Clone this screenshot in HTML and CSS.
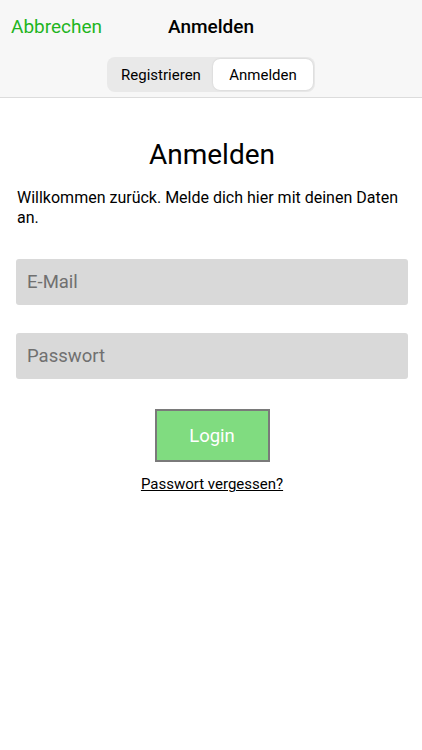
FILE: index.html
```html
<!DOCTYPE html>
<html lang="de">

<head>
  <meta charset="UTF-8">
  <meta name="viewport" content="width=device-width, initial-scale=1.0">
  <title>Anmelden</title>

  <link rel="stylesheet" href="styles.css">
</head>

<body>
  <header class="nav-bar">
    <div class="nav-top">
      <a class="btn-cancel" href="#">Abbrechen</a>
      <div class="nav-title">Anmelden</div>
      <span></span>
    </div>

    <div class="segment-row">
      <div class="segment">
        <button class="segment-item">Registrieren</button>
        <button class="segment-item active">Anmelden</button>
      </div>
    </div>
  </header>

  <main class="login-block">
    <h1 class="login-title">Anmelden</h1>
    <p class="login-intro">Willkommen zurück. Melde dich hier mit deinen Daten an.</p>

    <input class="field" type="email" placeholder="E-Mail" />
    <input class="field" type="password" placeholder="Passwort" />

    <button class="btn-login">Login</button>

    <a class="link-forgot" href="#">Passwort vergessen?</a>
  </main>
</body>

</html>
```

FILE: styles.css
```css
body {
  margin: 0;
  background-color: #FFF;
  font-family: Roboto, "Liberation Sans", sans-serif;
  color: #000;
}

.nav-bar {
  background-color: #f7f7f7;
  border-bottom: 1px solid #dcdcdc;
  height: 98px;
  box-sizing: border-box;
}

.nav-top {
  display: grid;
  grid-template-columns: 1fr auto 1fr;
  align-items: center;
  height: 52px;
  padding: 0 11px;
}

.btn-cancel {
  color: #1fb51f;
  font-size: 19px;
  text-decoration: none;
}

.nav-title {
  font-size: 19px;
  font-weight: 500;
}

.segment-row {
  display: flex;
  justify-content: center;
  padding-top: 5px;
}

.segment {
  display: flex;
  width: 208px;
  height: 35px;
  box-sizing: border-box;
  padding: 2px;
  background-color: #e9e9e9;
  border-radius: 8px;
}

.segment-item {
  border: none;
  background: none;
  font-family: inherit;
  font-size: 15px;
  color: #000;
  border-radius: 7px;
  padding: 0;
}

.segment-item:first-child {
  width: 104px;
}

.segment-item.active {
  width: 100px;
  background-color: #FFF;
  box-shadow: 0 0 2px rgba(0, 0, 0, 0.15);
}

.login-block {
  display: flex;
  flex-direction: column;
  padding: 0 14px 0 16px;
}

.login-title {
  margin: 40px 0 0;
  text-align: center;
  font-size: 28px;
  font-weight: 400;
  line-height: 34px;
}

.login-intro {
  margin: 16px -8px 0 1px;
  font-size: 16px;
  line-height: 20px;
}

.field {
  height: 46px;
  margin-top: 28px;
  padding: 0 11px;
  border: none;
  border-radius: 3px;
  background-color: #d9d9d9;
  font-family: inherit;
  font-size: 18.5px;
}

.field:first-of-type {
  margin-top: 31px;
}

.field::placeholder {
  color: #707070;
}

.btn-login {
  align-self: center;
  width: 115px;
  height: 53px;
  margin-top: 30px;
  border: 2px solid #7a7a7a;
  background-color: #80dc80;
  color: #FFF;
  font-family: inherit;
  font-size: 18.5px;
}

.link-forgot {
  align-self: center;
  margin-top: 13px;
  color: #000;
  font-size: 15px;
}
```
